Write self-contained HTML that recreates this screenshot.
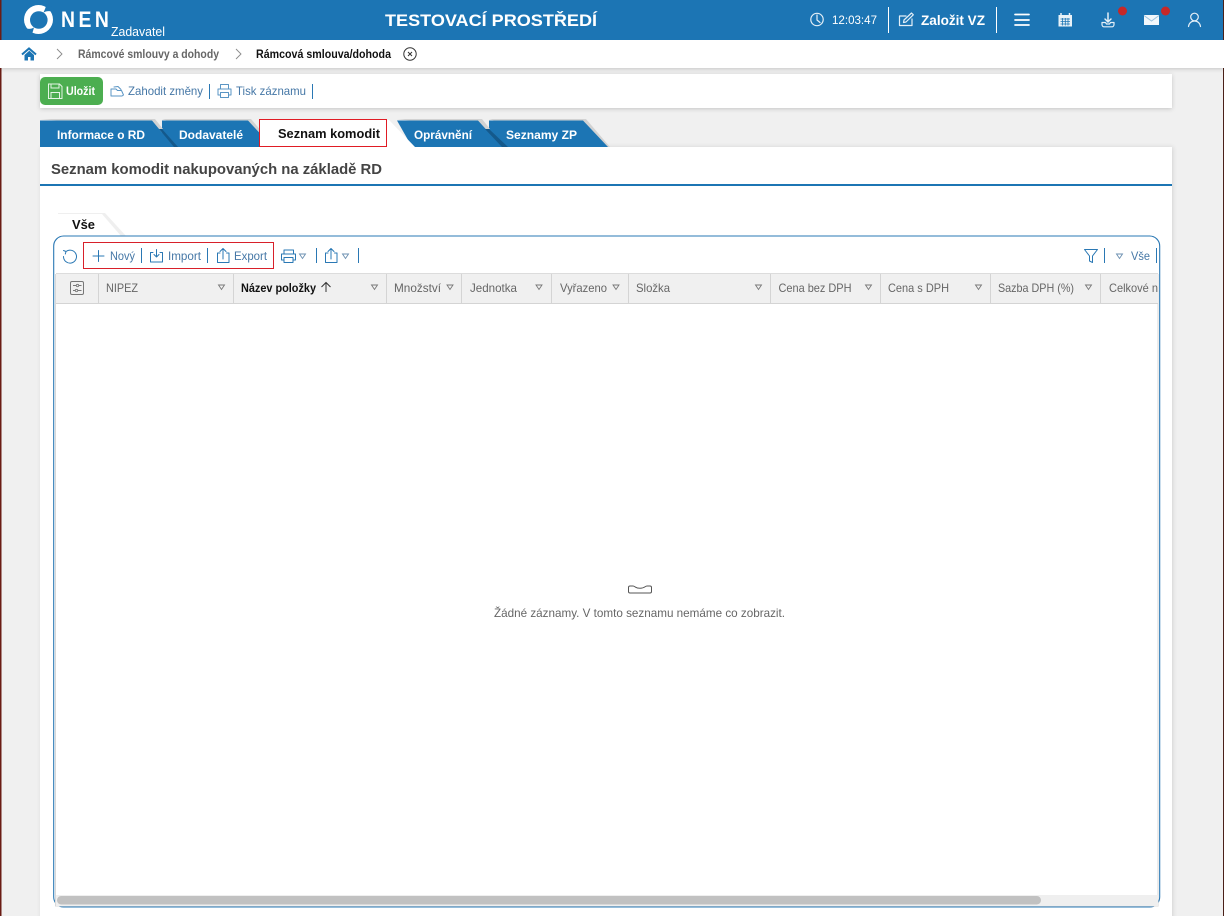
<!DOCTYPE html>
<html lang="cs"><head><meta charset="utf-8"><title>NEN</title>
<style>
html,body{margin:0;padding:0;width:1224px;height:916px;overflow:hidden;background:#f0f0f0}
svg{display:block;position:absolute;left:0;top:0}
text{font-family:"Liberation Sans",Arial,sans-serif;font-size:12px;fill:#666}
.b{font-weight:bold}
.w{fill:#fff}.l{fill:#4577a6}
.i{fill:none;stroke:#2a78b4;stroke-width:1;stroke-linejoin:round;stroke-linecap:round}
.h{fill:none;stroke:#e4eff7;stroke-width:1.2;stroke-linejoin:round;stroke-linecap:round}
.s{fill:none;stroke:#6b8fb0;stroke-width:.9}
</style></head><body>
<svg width="1224" height="916" viewBox="0 0 1224 916" xmlns="http://www.w3.org/2000/svg">
<defs>
<filter id="sh" x="-5%" y="-20%" width="110%" height="160%"><feDropShadow dx="0" dy="1" stdDeviation="2" flood-color="#000" flood-opacity=".18"/></filter>
<filter id="sp" x="-2%" y="-2%" width="104%" height="104%"><feDropShadow dx="1" dy="0" stdDeviation="2" flood-color="#000" flood-opacity=".12"/></filter>
</defs>
<rect width="1224" height="916" fill="#f0f0f0"/>
<rect x="0" y="0" width="1.5" height="916" fill="#6a1c14"/>
<rect x="1223" y="0" width="1" height="916" fill="#4a2018"/>

<!-- main panel -->
<rect x="40" y="147" width="1132" height="780" fill="#fff" filter="url(#sp)"/>
<!-- toolbar -->
<rect x="40" y="74" width="1132" height="34" fill="#fff" filter="url(#sh)"/>

<!-- header -->
<rect x="0" y="40" width="1224" height="28" fill="#fff" filter="url(#sh)"/>
<rect x="1.5" y="0" width="1221.5" height="40" fill="#1c75b4"/>
<circle cx="38.500" cy="19.500" r="14.500" fill="#fff"/>
<circle cx="38.800" cy="20" r="8.800" fill="#1c75b4"/>
<path d="M43.500 12.500C46 11 49 10.500 53 12L54.500 9 47 3.500 45 9z" fill="#1c75b4"/>
<path d="M34 27.500C31.500 29 28 29.500 24 27.500L22.500 31 31 37 33 31z" fill="#1c75b4"/>
<text class="w b" transform="translate(61,27) scale(.88,1)" style="font-size:22px;letter-spacing:4px">NEN</text>
<text class="w" x="111" y="36" style="font-size:12.5px" textLength="54" lengthAdjust="spacingAndGlyphs">Zadavatel</text>
<text class="w b" x="385" y="26" style="font-size:17px" textLength="212" lengthAdjust="spacingAndGlyphs">TESTOVACÍ PROSTŘEDÍ</text>

<circle cx="817" cy="19.5" r="6.2" class="h"/><path d="M817 15v5l3 2.5" class="h"/>
<text class="w" x="832" y="24" textLength="45" lengthAdjust="spacingAndGlyphs">12:03:47</text>
<rect x="888" y="7" width="1" height="26" fill="#fff"/>
<path d="M906 16h-6.500v9.500h12.500v-6.500M904 20l7.500-7 1.800 1.800-7.300 7.200-2.500.5z" class="h"/>
<text class="w b" x="921" y="25" style="font-size:14px" textLength="64" lengthAdjust="spacingAndGlyphs">Založit VZ</text>
<rect x="996" y="7" width="1" height="26" fill="#fff"/>
<path d="M1015 14.500h14M1015 20h14M1015 25h14" class="h" style="stroke-width:1.700;stroke:#fff"/>
<path d="M1058.500 15h13.500v11.500h-13.500z" fill="#e8f2f8"/><path d="M1061 13v3M1069.500 13v3" stroke="#e8f2f8" stroke-width="1.500"/>
<path d="M1060.500 19h9.500M1060.500 21.500h9.500M1060.500 24h9.500M1062.500 18v7.500M1065.300 18v7.500M1068 18v7.500" stroke="#1c75b4" stroke-width=".8"/>
<path d="M1108 13v9M1105 19l3 3 3-3" class="h" style="stroke-width:1.500"/><path d="M1102 22.500v2c0 1.500 1 2.300 2 2.300h8c1 0 2-.8 2-2.300v-2h-3.500l-1 1.500h-3l-1-1.500z" class="h"/>
<circle cx="1122.500" cy="11" r="4.500" fill="#c62828"/>
<rect x="1144" y="15" width="15" height="10" fill="#f2f7fb"/><path d="M1144 15.500l7.500 5.500 7.500-5.500" fill="none" stroke="#9cc3de" stroke-width="1"/>
<circle cx="1165.500" cy="11" r="4.500" fill="#c62828"/>
<circle cx="1194.500" cy="17" r="3.800" class="h"/><path d="M1188.500 26.500c.5-3.500 3-5.500 6-5.500s5.500 2 6 5.500" class="h"/>

<!-- breadcrumb -->
<path d="M22 54.500l7-6 7 6" fill="none" stroke="#1c75b4" stroke-width="2"/><path d="M24.500 55v5.500h3.500v-3.500h2.500v3.500h3.500v-5.500l-4.700-4.300z" fill="#1c75b4"/>
<path d="M57 49l5 5-5 5M236 49l5 5-5 5" fill="none" stroke="#8a8a8a" stroke-width=".9"/>
<text class="b" x="78" y="58" style="font-size:12px" textLength="141" lengthAdjust="spacingAndGlyphs">Rámcové smlouvy a dohody</text>
<text class="b" x="256" y="58" style="font-size:12px;fill:#111" textLength="135" lengthAdjust="spacingAndGlyphs">Rámcová smlouva/dohoda</text>
<circle cx="410" cy="54" r="6.200" fill="none" stroke="#333" stroke-width="1"/><path d="M408 52l4 4M412 52l-4 4" stroke="#333" stroke-width="1"/>

<!-- page toolbar -->
<rect x="40" y="77" width="63" height="28" rx="5" fill="#4cae50"/>
<path d="M48.500 84h11l2.500 2.500v12h-13.500z" fill="none" stroke="#e5f4e5" stroke-width="1"/><path d="M51 84v4h8v-4M51 98v-5.500h8.500v5.500" fill="none" stroke="#e5f4e5" stroke-width="1"/>
<text class="w b" x="66" y="95" textLength="29" lengthAdjust="spacingAndGlyphs">Uložit</text>
<path d="M111 96v-7h5l1.500 1.500h4l2 4.500-1.500 1h-11M114 87l4-.5 3 3" class="i" style="stroke:#5a95c4"/>
<text class="l" x="128" y="95" textLength="75" lengthAdjust="spacingAndGlyphs">Zahodit změny</text>
<rect x="209" y="84" width="1" height="15" fill="#2a78b4"/>
<path d="M220.500 89v-4.500h8v4.500M218 89h13v6h-2.500M220.500 95H218v-6M220.500 92.500h8v5h-8z" class="i" style="stroke:#5a95c4"/>
<text class="l" x="236" y="95" textLength="70" lengthAdjust="spacingAndGlyphs">Tisk záznamu</text>
<rect x="312" y="84" width="1" height="15" fill="#2a78b4"/>

<!-- tabs -->
<g>
<path d="M489 119h97l24 28h-30z" fill="#d2d2d2"/>
<path d="M489 120.500h94l25 26.500h-119z" fill="#1c75b4"/>
<path d="M397 119h85l8 10h-12z" fill="#d2d2d2"/>
<path d="M397 120.500h81l24 26.500h-90z" fill="#1c75b4"/>
<path d="M485 129l4 0 19 18h-6z" fill="#14598c"/>
<path d="M162 119h89l24 28h-30z" fill="#d2d2d2"/>
<path d="M162 120.500h86l13 14v12.500h-99z" fill="#1c75b4"/>
<path d="M40 119h115l8 10h-12z" fill="#d2d2d2"/>
<path d="M40 120.500h112l22 26.500H40z" fill="#1c75b4"/>
<path d="M159 129h3l16 18h-4z" fill="#14598c"/>
<path d="M259 120h130l26 27H259z" fill="#fff"/>
<rect x="259.500" y="119.500" width="127" height="27" fill="#fff" stroke="#e01b24" stroke-width="1"/>
</g>
<text class="w b" x="57" y="139" textLength="88" lengthAdjust="spacingAndGlyphs">Informace o RD</text>
<text class="w b" x="179" y="139" textLength="64" lengthAdjust="spacingAndGlyphs">Dodavatelé</text>
<text class="b" x="278" y="138" style="font-size:13px;fill:#111" textLength="102" lengthAdjust="spacingAndGlyphs">Seznam komodit</text>
<text class="w b" x="414" y="139" textLength="58" lengthAdjust="spacingAndGlyphs">Oprávnění</text>
<text class="w b" x="506" y="139" textLength="71" lengthAdjust="spacingAndGlyphs">Seznamy ZP</text>

<text class="b" x="51" y="174" style="font-size:15px;fill:#444" textLength="331" lengthAdjust="spacingAndGlyphs">Seznam komodit nakupovaných na základě RD</text>
<rect x="40" y="184" width="1132" height="2" fill="#1c75b4"/>

<!-- inner tab -->
<path d="M58 213h47l21 23H58z" fill="#efefef"/>
<path d="M58 214h44l19 22H58z" fill="#fff"/>
<text class="b" x="72" y="229" style="font-size:13px;fill:#111" textLength="23" lengthAdjust="spacingAndGlyphs">Vše</text>

<!-- grid box -->
<rect x="53.700" y="236" width="1106" height="671" rx="10" fill="#fff" stroke="#2a78b4" stroke-width="1.100"/>
<path d="M55.500 274V906H1158V274" fill="none" stroke="#d8d8d8" stroke-width="1"/>
<rect x="56" y="274" width="1102" height="29" fill="#f0f0f0"/>
<rect x="56" y="303" width="1102" height="1" fill="#d4d4d4"/>
<rect x="56" y="273" width="1102" height="1" fill="#dcdcdc"/>
<g fill="#d4d4d4">
<rect x="98" y="274" width="1" height="29"/><rect x="233" y="274" width="1" height="29"/><rect x="386" y="274" width="1" height="29"/><rect x="461" y="274" width="1" height="29"/><rect x="551" y="274" width="1" height="29"/><rect x="628" y="274" width="1" height="29"/><rect x="770" y="274" width="1" height="29"/><rect x="880" y="274" width="1" height="29"/><rect x="990" y="274" width="1" height="29"/><rect x="1100" y="274" width="1" height="29"/>
</g>

<!-- grid toolbar -->
<path d="M66 251.500a6.500 6.500 0 1 1-2.500 5M66 251.500l-2.500-1M66 251.500l-.7 2.500" class="i"/>
<rect x="83.500" y="242.500" width="190" height="26" fill="none" stroke="#d8202a" stroke-width="1"/>
<path d="M98.500 250.500v11M93 256h11" class="i"/>
<text class="l" x="110" y="260" textLength="25" lengthAdjust="spacingAndGlyphs">Nový</text>
<rect x="141" y="248" width="1" height="15" fill="#2a78b4"/>
<path d="M153 252.500h-2.500v9.500h12v-9.500H160M156.500 249.500v7.500M154 254.500l2.500 2.500 2.500-2.500" class="i"/>
<text class="l" x="168" y="260" textLength="33" lengthAdjust="spacingAndGlyphs">Import</text>
<rect x="207" y="248" width="1" height="15" fill="#2a78b4"/>
<path d="M220 253h-2.500v9.500H229V253h-2.500M223 259v-10M220 251.500l3-3 3 3" class="i"/>
<text class="l" x="234" y="260" textLength="33" lengthAdjust="spacingAndGlyphs">Export</text>
<path d="M284 254v-4h9.500v4M281.500 254h14v6h-2.500M284 260h-2.500v-6M284 257.500h9v5h-9z" class="i"/>
<path d="M299.500 254h6l-3 4.500z" class="s"/>
<rect x="316" y="248" width="1" height="15" fill="#2a78b4"/>
<path d="M328 253h-2.500v9.500H337V253h-2.500M331 259v-10M328 251.500l3-3 3 3" class="i"/>
<path d="M342.500 254h6l-3 4.500z" class="s"/>
<rect x="358" y="248" width="1" height="15" fill="#2a78b4"/>
<path d="M1084.500 249.500h13l-5 6.500v6.500l-3-1.500v-5z" class="i"/>
<rect x="1104" y="248" width="1" height="15" fill="#2a78b4"/>
<path d="M1116.500 254h6l-3 4.500z" class="s"/>
<text class="l" x="1131" y="260" textLength="19" lengthAdjust="spacingAndGlyphs">Vše</text>
<rect x="1156" y="248" width="1" height="15" fill="#2a78b4"/>

<!-- column headers -->
<rect x="70.500" y="281.500" width="13" height="13" rx="1.500" fill="none" stroke="#777" stroke-width="1"/>
<path d="M73 285.500h3.500M79 285.500h2.500M73 290.500h2.500M78 290.500h3.500" stroke="#777" stroke-width="1"/><circle cx="77.500" cy="285.500" r="1.200" fill="none" stroke="#777" stroke-width=".8"/><circle cx="76.500" cy="290.500" r="1.200" fill="none" stroke="#777" stroke-width=".8"/>
<text x="106" y="292" textLength="32" lengthAdjust="spacingAndGlyphs">NIPEZ</text>
<text class="b" x="241" y="292" style="fill:#111" textLength="75" lengthAdjust="spacingAndGlyphs">Název položky</text>
<path d="M326 292v-9.500M321.500 287l4.500-4.500 4.500 4.500" fill="none" stroke="#333" stroke-width="1"/>
<text x="394" y="292" textLength="47" lengthAdjust="spacingAndGlyphs">Množství</text>
<text x="470" y="292" textLength="47" lengthAdjust="spacingAndGlyphs">Jednotka</text>
<text x="560" y="292" textLength="47" lengthAdjust="spacingAndGlyphs">Vyřazeno</text>
<text x="636" y="292" textLength="34" lengthAdjust="spacingAndGlyphs">Složka</text>
<text x="778.500" y="292" textLength="73" lengthAdjust="spacingAndGlyphs">Cena bez DPH</text>
<text x="888" y="292" textLength="61" lengthAdjust="spacingAndGlyphs">Cena s DPH</text>
<text x="998" y="292" textLength="76" lengthAdjust="spacingAndGlyphs">Sazba DPH (%)</text>
<text x="1109" y="292" textLength="49" lengthAdjust="spacingAndGlyphs">Celkové n</text>
<g fill="none" stroke="#777" stroke-width=".9">
<path d="M218.500 285h6l-3 4.500z"/><path d="M371.500 285h6l-3 4.500z"/><path d="M447 285h6l-3 4.500z"/><path d="M536 285h6l-3 4.500z"/><path d="M613 285h6l-3 4.500z"/><path d="M755.500 285h6l-3 4.500z"/><path d="M865.500 285h6l-3 4.500z"/><path d="M975.500 285h6l-3 4.500z"/><path d="M1085.500 285h6l-3 4.500z"/>
</g>

<!-- empty state -->
<path d="M630 586h3c2 0 2 2.200 7 2.200s5-2.200 7-2.200h3c1 0 1.500.7 1.500 1.500v4c0 1-.7 1.500-1.500 1.500h-20c-1 0-1.500-.7-1.500-1.500v-4c0-1 .7-1.500 1.500-1.500z" fill="none" stroke="#555" stroke-width="1"/>
<text x="494" y="617" textLength="291" lengthAdjust="spacingAndGlyphs">Žádné záznamy. V tomto seznamu nemáme co zobrazit.</text>

<!-- scrollbar -->
<rect x="56" y="895" width="1102" height="11" fill="#efefef"/>
<rect x="57" y="896" width="984" height="8.500" rx="4.200" fill="#c1c1c1"/>
</svg>
</body></html>
